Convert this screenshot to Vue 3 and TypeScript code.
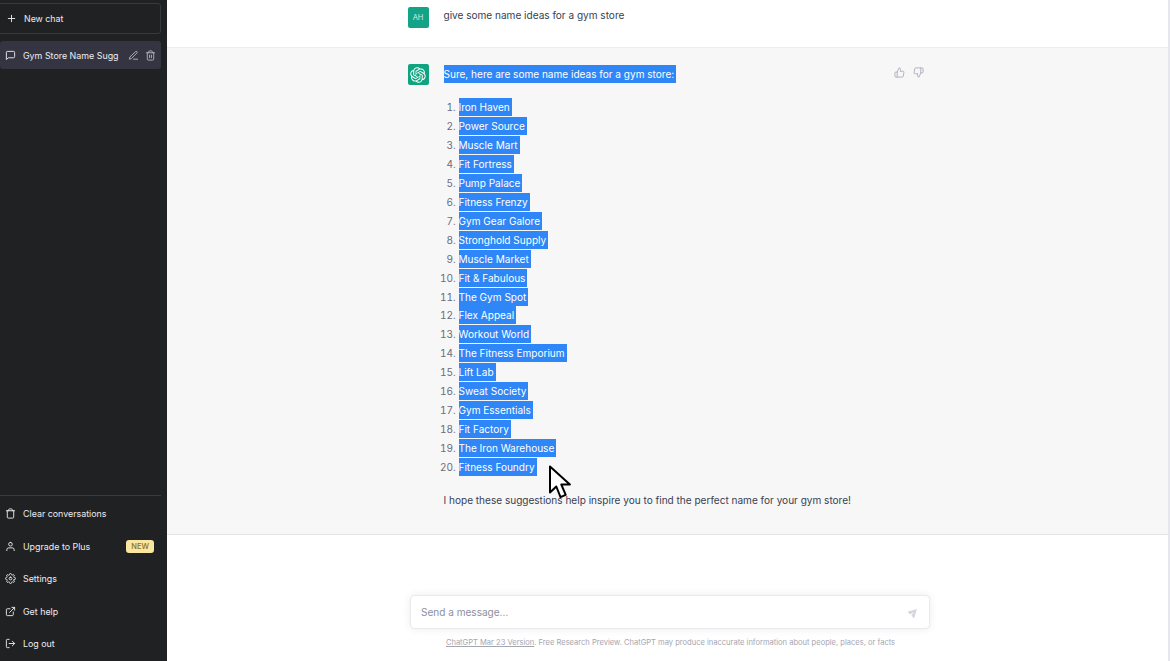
<template>
  <div class="app">
    <aside class="sidebar">
      <button class="new-chat">
        <svg class="icon" viewBox="0 0 24 24"><path d="M12 5v14M5 12h14" /></svg>
        New chat
      </button>
      <div class="chat-item">
        <svg class="icon" viewBox="0 0 24 24"><path d="M21 15a2 2 0 0 1-2 2H7l-4 4V5a2 2 0 0 1 2-2h14a2 2 0 0 1 2 2z" /></svg>
        <span class="chat-title">Gym Store Name Sugg</span>
        <svg class="icon small" viewBox="0 0 24 24"><path d="M12 20h9" /><path d="M16.5 3.5a2.12 2.12 0 0 1 3 3L7 19l-4 1 1-4z" /></svg>
        <svg class="icon small" viewBox="0 0 24 24"><path d="M3 6h18" /><path d="M19 6v14a2 2 0 0 1-2 2H7a2 2 0 0 1-2-2V6m3 0V4a2 2 0 0 1 2-2h4a2 2 0 0 1 2 2v2" /><path d="M10 11v6M14 11v6" /></svg>
      </div>

      <div class="side-bottom">
        <a v-for="item in menu" :key="item.label" class="menu-item">
          <svg class="icon" viewBox="0 0 24 24"><path v-for="d in item.paths" :key="d" :d="d" /></svg>
          <span>{{ item.label }}</span>
          <span v-if="item.badge" class="badge">{{ item.badge }}</span>
        </a>
      </div>
    </aside>

    <main class="main">
      <div class="row user-row">
        <div class="row-inner">
          <div class="avatar user">AH</div>
          <p class="prompt">give some name ideas for a gym store</p>
        </div>
      </div>

      <div class="row answer-row">
        <div class="row-inner">
          <div class="avatar bot">
            <svg viewBox="0 0 41 41"><path d="M37.5324 16.8707C37.9808 15.5241 38.1363 14.0974 37.9886 12.6859C37.8409 11.2744 37.3934 9.91076 36.676 8.68622C35.6126 6.83404 33.9882 5.3676 32.0373 4.4985C30.0864 3.62941 27.9098 3.40259 25.8215 3.85078C24.8796 2.7893 23.7219 1.94125 22.4257 1.36341C21.1295 0.785575 19.7249 0.491269 18.3058 0.500197C16.1708 0.495044 14.0893 1.16803 12.3614 2.42214C10.6335 3.67624 9.34853 5.44666 8.6917 7.47815C7.30085 7.76286 5.98686 8.3414 4.8377 9.17505C3.68854 10.0087 2.73073 11.0782 2.02839 12.312C0.956464 14.1591 0.498905 16.2988 0.721698 18.4228C0.944492 20.5467 1.83612 22.5449 3.268 24.1293C2.81966 25.4759 2.66413 26.9026 2.81182 28.3141C2.95951 29.7256 3.40701 31.0892 4.12437 32.3138C5.18791 34.1659 6.8123 35.6322 8.76321 36.5013C10.7141 37.3704 12.8907 37.5973 14.9789 37.1492C15.9208 38.2107 17.0786 39.0587 18.3747 39.6366C19.6709 40.2144 21.0755 40.5087 22.4946 40.4998C24.6307 40.5054 26.7133 39.8321 28.4418 38.5772C30.1704 37.3223 31.4556 35.5506 32.1119 33.5179C33.5027 33.2332 34.8167 32.6547 35.9659 31.821C37.115 30.9874 38.0728 29.9178 38.7752 28.684C39.8458 26.8371 40.3023 24.6979 40.0789 22.5748C39.8556 20.4517 38.9639 18.4544 37.5324 16.8707ZM22.4978 37.8849C20.7443 37.8874 19.0459 37.2733 17.6994 36.1501C17.7601 36.117 17.8666 36.0586 17.936 36.0161L25.9004 31.4156C26.1003 31.3019 26.2663 31.137 26.3813 30.9378C26.4964 30.7386 26.5563 30.5124 26.5549 30.2825V19.0542L29.9213 20.998C29.9389 21.0068 29.9541 21.0198 29.9656 21.0359C29.977 21.052 29.9842 21.0707 29.9867 21.0902V30.3889C29.9842 32.375 29.1946 34.2791 27.7909 35.6841C26.3872 37.0892 24.4838 37.8806 22.4978 37.8849ZM6.39227 31.0064C5.51397 29.4888 5.19742 27.7107 5.49804 25.9832C5.55718 26.0187 5.66048 26.0818 5.73461 26.1244L13.699 30.7248C13.8975 30.8408 14.1233 30.902 14.3532 30.902C14.583 30.902 14.8088 30.8408 15.0073 30.7248L24.731 25.1103V28.9979C24.7321 29.0177 24.7283 29.0376 24.7199 29.0556C24.7115 29.0736 24.6988 29.0893 24.6829 29.1012L16.6317 33.7497C14.9096 34.7416 12.8643 35.0097 10.9447 34.4954C9.02506 33.9811 7.38785 32.7263 6.39227 31.0064ZM4.29707 13.6194C5.17156 12.0998 6.55279 10.9364 8.19885 10.3327C8.19885 10.4013 8.19491 10.5228 8.19491 10.6071V19.808C8.19351 20.0378 8.25334 20.2638 8.36823 20.4629C8.48312 20.6619 8.64893 20.8267 8.84863 20.9404L18.5723 26.5542L15.206 28.4979C15.1894 28.5089 15.1703 28.5155 15.1505 28.5173C15.1307 28.5191 15.1107 28.516 15.0924 28.5082L7.04046 23.8557C5.32135 22.8601 4.06716 21.2235 3.55289 19.3046C3.03862 17.3858 3.30624 15.3413 4.29707 13.6194ZM31.955 20.0556L22.2312 14.4411L25.5976 12.4981C25.6142 12.4872 25.6333 12.4805 25.6531 12.4787C25.6729 12.4769 25.6928 12.4801 25.7111 12.4879L33.7631 17.1364C34.9967 17.849 36.0017 18.8982 36.6606 20.1613C37.3194 21.4244 37.6047 22.849 37.4832 24.2684C37.3617 25.6878 36.8382 27.0432 35.9743 28.1759C35.1103 29.3086 33.9415 30.1717 32.6047 30.6641C32.6047 30.5947 32.6047 30.4733 32.6047 30.3889V21.188C32.6066 20.9586 32.5474 20.7328 32.4332 20.5338C32.319 20.3348 32.154 20.1698 31.955 20.0556ZM35.3055 15.0128C35.2464 14.9765 35.1431 14.9142 35.069 14.8717L27.1045 10.2712C26.906 10.1554 26.6803 10.0943 26.4504 10.0943C26.2206 10.0943 25.9948 10.1554 25.7963 10.2712L16.0726 15.8858V11.9982C16.0715 11.9783 16.0753 11.9585 16.0837 11.9405C16.0921 11.9225 16.1048 11.9068 16.1207 11.8949L24.1719 7.25025C25.4053 6.53903 26.8158 6.19376 28.2383 6.25482C29.6608 6.31589 31.0364 6.78077 32.2044 7.59508C33.3723 8.40939 34.2842 9.53945 34.8334 10.8531C35.3826 12.1667 35.5464 13.6095 35.3055 15.0128ZM14.2424 21.9419L10.8752 19.9981C10.8576 19.9893 10.8423 19.9763 10.8309 19.9602C10.8195 19.9441 10.8122 19.9254 10.8098 19.9058V10.6071C10.8107 9.18295 11.2173 7.78848 11.9819 6.58696C12.7466 5.38544 13.8377 4.42659 15.1275 3.82264C16.4173 3.21869 17.8524 2.99464 19.2649 3.1767C20.6775 3.35876 22.0089 3.93941 23.1034 4.85067C23.0427 4.88379 22.937 4.94215 22.8668 4.98473L14.9024 9.58517C14.7025 9.69878 14.5366 9.86356 14.4215 10.0626C14.3065 10.2616 14.2466 10.4877 14.2479 10.7175L14.2424 21.9419ZM16.071 17.9991L20.4018 15.4978L24.7325 17.9975V22.9985L20.4018 25.4983L16.071 22.9985V17.9991Z" /></svg>
          </div>
          <div class="answer">
            <p class="intro"><span class="sel">Sure, here are some name ideas for a gym store:</span></p>
            <ol>
              <li v-for="name in names" :key="name"><span class="sel">{{ name }}</span></li>
            </ol>
            <p class="outro">I hope these suggestions help inspire you to find the perfect name for your gym store!</p>
          </div>
          <div class="thumbs">
            <svg viewBox="0 0 24 24"><path d="M14 9V5a3 3 0 0 0-3-3l-4 9v11h11.28a2 2 0 0 0 2-1.7l1.38-9a2 2 0 0 0-2-2.3zM7 22H4a2 2 0 0 1-2-2v-7a2 2 0 0 1 2-2h3" /></svg>
            <svg viewBox="0 0 24 24"><path d="M10 15v4a3 3 0 0 0 3 3l4-9V2H5.72a2 2 0 0 0-2 1.7l-1.38 9a2 2 0 0 0 2 2.3zm7-13h2.67A2.31 2.31 0 0 1 22 4v7a2.31 2.31 0 0 1-2.33 2H17" /></svg>
          </div>
        </div>
      </div>

      <div class="composer">
        <div class="input">
          <span>Send a message...</span>
          <svg viewBox="0 0 20 20"><path d="M.5 1.163A1 1 0 0 1 1.97.28l12.868 6.837a1 1 0 0 1 0 1.766L1.969 15.72A1 1 0 0 1 .5 14.836V10.33a1 1 0 0 1 .816-.983L8.5 8 1.316 6.653A1 1 0 0 1 .5 5.67V1.163Z" transform="rotate(-45 8 8) translate(2 4)" /></svg>
        </div>
        <p class="footnote"><u>ChatGPT Mar 23 Version</u>. Free Research Preview. ChatGPT may produce inaccurate information about people, places, or facts</p>
      </div>
    </main>

    <div class="scrollbar"></div>

    <svg class="cursor" viewBox="0 0 22 34"><path d="M1.5 1.5v26l6.3-6 4.2 10.6 5.2-2.2-4.4-10.4h8.6z" /></svg>
  </div>
</template>

<script setup lang="ts">
interface MenuItem {
  label: string
  paths: string[]
  badge?: string
}

const menu: MenuItem[] = [
  {
    label: 'Clear conversations',
    paths: ['M3 6h18', 'M19 6v14a2 2 0 0 1-2 2H7a2 2 0 0 1-2-2V6m3 0V4a2 2 0 0 1 2-2h4a2 2 0 0 1 2 2v2'],
  },
  {
    label: 'Upgrade to Plus',
    paths: ['M20 21v-2a4 4 0 0 0-4-4H8a4 4 0 0 0-4 4v2', 'M12 3a4 4 0 1 0 0 8 4 4 0 0 0 0-8z'],
    badge: 'NEW',
  },
  {
    label: 'Settings',
    paths: [
      'M12 9a3 3 0 1 0 0 6 3 3 0 0 0 0-6z',
      'M19.4 15a1.65 1.65 0 0 0 .33 1.82l.06.06a2 2 0 1 1-2.83 2.83l-.06-.06a1.65 1.65 0 0 0-2.82 1.17V21a2 2 0 0 1-4 0v-.09A1.65 1.65 0 0 0 7.26 19.7l-.06.06a2 2 0 1 1-2.83-2.83l.06-.06A1.65 1.65 0 0 0 3.09 14H3a2 2 0 0 1 0-4h.09A1.65 1.65 0 0 0 4.3 7.26l-.06-.06a2 2 0 1 1 2.83-2.83l.06.06A1.65 1.65 0 0 0 10 3.09V3a2 2 0 0 1 4 0v.09a1.65 1.65 0 0 0 2.74 1.17l.06-.06a2 2 0 1 1 2.83 2.83l-.06.06A1.65 1.65 0 0 0 20.91 10H21a2 2 0 0 1 0 4h-.09a1.65 1.65 0 0 0-1.51 1z',
    ],
  },
  {
    label: 'Get help',
    paths: ['M18 13v6a2 2 0 0 1-2 2H5a2 2 0 0 1-2-2V8a2 2 0 0 1 2-2h6', 'M15 3h6v6', 'M10 14L21 3'],
  },
  {
    label: 'Log out',
    paths: ['M9 21H5a2 2 0 0 1-2-2V5a2 2 0 0 1 2-2h4', 'M16 17l5-5-5-5', 'M21 12H9'],
  },
]

const names = [
  'Iron Haven',
  'Power Source',
  'Muscle Mart',
  'Fit Fortress',
  'Pump Palace',
  'Fitness Frenzy',
  'Gym Gear Galore',
  'Stronghold Supply',
  'Muscle Market',
  'Fit & Fabulous',
  'The Gym Spot',
  'Flex Appeal',
  'Workout World',
  'The Fitness Emporium',
  'Lift Lab',
  'Sweat Society',
  'Gym Essentials',
  'Fit Factory',
  'The Iron Warehouse',
  'Fitness Foundry',
]
</script>

<style>
html, body { margin: 0; background: #fff; overflow: hidden; }
</style>

<style scoped>
.app {
  position: relative;
  display: flex;
  width: 1170px;
  height: 661px;
  overflow: hidden;
  font-family: Inter, "Liberation Sans", sans-serif;
  font-size: 10.05px;
  color: #374151;
  background: #fff;
}

/* sidebar */
.sidebar {
  flex: 0 0 167px;
  width: 167px;
  min-width: 0;
  display: flex;
  flex-direction: column;
  box-sizing: border-box;
  padding: 3px 6px 0 0;
  background: #202123;
  color: #ececf1;
}

.icon {
  flex: none;
  width: 11px;
  height: 11px;
  fill: none;
  stroke: currentColor;
  stroke-width: 2;
  stroke-linecap: round;
  stroke-linejoin: round;
}
.icon.small { color: #b4b4bd; }

.new-chat {
  display: flex;
  align-items: center;
  gap: 7px;
  height: 31px;
  margin-left: -4px;
  padding: 0 0 0 9px;
  border: 1px solid #38393b;
  border-radius: 3px;
  font: inherit;
  font-size: 8.8px;
  color: #ececf1;
  background: transparent;
}

.chat-item {
  display: flex;
  align-items: center;
  height: 28px;
  margin-top: 7px;
  padding: 0 5px;
  border-radius: 3px;
  font-size: 8.9px;
  background: #343541;
}
.chat-title { flex: 1; margin-left: 7px; white-space: nowrap; }
.chat-item .small + .small { margin-left: 6px; }

.side-bottom {
  display: flex;
  flex-direction: column;
  margin-top: auto;
  padding: 2px 0 1px;
  border-top: 1px solid #3a3b3d;
}

.menu-item {
  display: flex;
  align-items: center;
  gap: 7px;
  height: 32.5px;
  padding-left: 5px;
  font-size: 8.9px;
}
.badge {
  margin-left: auto;
  margin-right: 7px;
  padding: 2px 5px;
  border-radius: 3px;
  font-size: 7.5px;
  font-weight: 500;
  line-height: 9px;
  color: #8a6d1e;
  background: #fae69e;
}

/* conversation */
.main {
  flex: 1;
  display: flex;
  flex-direction: column;
  min-width: 0;
  padding-right: 2px;
}

.row { display: flex; justify-content: center; }
.row-inner {
  display: flex;
  width: 520px;
}

.user-row { height: 48px; border-bottom: 1px solid #eceef1; box-sizing: border-box; }
.answer-row {
  height: 487px;
  box-sizing: border-box;
  padding-top: 17px;
  border-bottom: 1px solid #e5e5e8;
  background: #f7f7f8;
}

.avatar {
  flex: none;
  display: flex;
  align-items: center;
  justify-content: center;
  width: 21px;
  height: 21px;
  border-radius: 2px;
  color: #fff;
}
.avatar.user { margin-top: 7px; font-size: 7.5px; color: #c9efe6; background: #14a386; }
.avatar.bot { margin-top: -1px; background: #10a37f; }
.avatar.bot svg { width: 16px; height: 16px; fill: #fff; }

.prompt { margin: 7px 0 0 15px; line-height: 16px; }

.answer { flex: 1; margin-left: 15px; }
.intro { margin: 0; line-height: 19px; }
.sel { padding: 3px 2px 3px 0; color: #fff; background: #2f86f6; }

ol {
  margin: 14px 0 0;
  padding: 0 0 0 15px;
  line-height: 18.95px;
}
li::marker { color: #6b6c7b; }

.outro { margin: 14px 0 0; line-height: 19px; }

.thumbs { flex: none; display: flex; gap: 8px; margin-top: 2px; margin-right: 4px; }
.thumbs svg {
  width: 11px;
  height: 11px;
  fill: none;
  stroke: #acacbe;
  stroke-width: 2;
  stroke-linecap: round;
  stroke-linejoin: round;
}

/* composer */
.composer {
  display: flex;
  flex-direction: column;
  align-items: center;
  margin-top: 60px;
}
.input {
  display: flex;
  align-items: center;
  justify-content: space-between;
  box-sizing: border-box;
  width: 520px;
  height: 34px;
  margin-left: 5px;
  padding: 0 11px 0 10px;
  border: 1px solid #e9e9ee;
  border-radius: 4px;
  color: #8e8ea0;
  background: #fff;
  box-shadow: 0 0 8px rgba(0, 0, 0, 0.08);
}
.input svg { width: 11px; height: 11px; fill: #d6d6de; }

.footnote {
  margin: 8px 0 0 6px;
  font-size: 7.56px;
  line-height: 12px;
  color: #a5a5b0;
}

.scrollbar {
  position: absolute;
  top: 0;
  right: 0;
  width: 2px;
  height: 661px;
  background: #e6e6ee;
}

.cursor {
  position: absolute;
  left: 548px;
  top: 465px;
  width: 23px;
  height: 34px;
  fill: #fff;
  stroke: #000;
  stroke-width: 2;
  stroke-linejoin: round;
}
</style>
